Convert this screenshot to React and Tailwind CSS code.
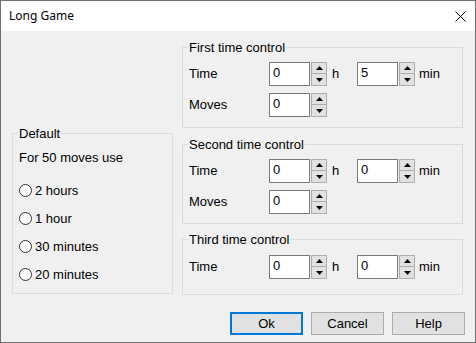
import React from "react";

function Spinner() {
  return (
    <div className="ml-[1px] flex h-[24px] w-[16px] flex-col">
      <div className="flex h-[12px] items-center justify-center border border-[#adadad] bg-[#e1e1e1]">
        <svg width="7" height="4" viewBox="0 0 7 4"><path d="M0 4 L3.5 0 L7 4 Z" fill="#000" /></svg>
      </div>
      <div className="flex h-[12px] items-center justify-center border border-t-0 border-[#adadad] bg-[#e1e1e1]">
        <svg width="7" height="4" viewBox="0 0 7 4"><path d="M0 0 L3.5 4 L7 0 Z" fill="#000" /></svg>
      </div>
    </div>
  );
}

function NumInput({ value }) {
  return (
    <div className="flex items-center">
      <div className="h-[24px] w-[41px] border border-[#7a7a7a] bg-white pl-[3px] pt-[2px] leading-[15px]">{value}</div>
      <Spinner />
    </div>
  );
}

function Group({ label, className, children }) {
  return (
    <div className={"relative border border-[#dcdcdc] " + className}>
      <span className="absolute left-[5px] top-[-8px] bg-[#f0f0f0] px-[1px] leading-[15px]">{label}</span>
      {children}
    </div>
  );
}

function Row({ label, children }) {
  return (
    <div className="flex h-[24px] items-center">
      <span className="w-[80px]">{label}</span>
      {children}
    </div>
  );
}

function TimeRow({ h, m }) {
  return (
    <Row label="Time">
      <NumInput value={h} />
      <span className="w-[30px] pl-[5px]">h</span>
      <NumInput value={m} />
      <span className="pl-[4px]">min</span>
    </Row>
  );
}

function Radio({ label }) {
  return (
    <div className="flex h-[15px] items-center gap-[3px] leading-[15px]">
      <svg width="13" height="13" viewBox="0 0 13 13">
        <circle cx="6.5" cy="6.5" r="6" fill="#fff" stroke="#333" strokeWidth="1" />
      </svg>
      <span>{label}</span>
    </div>
  );
}

function Button({ children, primary }) {
  return (
    <div
      className={
        "flex h-[23px] w-[73px] items-center justify-center bg-[#e1e1e1] leading-[15px] " +
        (primary ? "border-2 border-[#0078d7]" : "border border-[#adadad]")
      }
    >
      {children}
    </div>
  );
}

export default function App() {
  return (
    <div className="flex h-[343px] w-[476px] flex-col border border-[#707070] bg-[#f0f0f0] font-['Liberation_Sans',Arial,sans-serif] text-[13px] text-black">
      <div className="flex h-[30px] items-center justify-between bg-white pl-[8px] pr-[9px]">
        <span className="font-['Noto_Sans',sans-serif] text-[12px]">Long Game</span>
        <svg width="11" height="11" viewBox="0 0 11 11">
          <path d="M0.5 0.5 L10.5 10.5 M10.5 0.5 L0.5 10.5" stroke="#000" strokeWidth="1" />
        </svg>
      </div>
      <div className="flex flex-1 flex-col pl-[11px] pr-[10px] pt-[16px]">
        <div className="flex items-end gap-[9px]">
          <Group label="Default" className="mb-[1px] h-[161px] w-[161px] pl-[6px] pt-[16px]">
            <div className="leading-[15px]">For 50 moves use</div>
            <div className="mt-[18px] flex flex-col gap-[13px]">
              <Radio label="2 hours" />
              <Radio label="1 hour" />
              <Radio label="30 minutes" />
              <Radio label="20 minutes" />
            </div>
          </Group>
          <div className="flex w-[281px] flex-col">
            <Group label="First time control" className="flex h-[81px] flex-col gap-[7px] pl-[6px] pt-[14px]">
              <TimeRow h="0" m="5" />
              <Row label="Moves">
                <NumInput value="0" />
              </Row>
            </Group>
            <Group label="Second time control" className="mt-[16px] flex h-[80px] flex-col gap-[7px] pl-[6px] pt-[14px]">
              <TimeRow h="0" m="0" />
              <Row label="Moves">
                <NumInput value="0" />
              </Row>
            </Group>
            <Group label="Third time control" className="mt-[15px] flex h-[56px] flex-col pl-[6px] pt-[15px]">
              <TimeRow h="0" m="0" />
            </Group>
          </div>
        </div>
        <div className="mt-[17px] flex justify-end gap-[8px]">
          <Button primary>Ok</Button>
          <Button>Cancel</Button>
          <Button>Help</Button>
        </div>
      </div>
    </div>
  );
}
